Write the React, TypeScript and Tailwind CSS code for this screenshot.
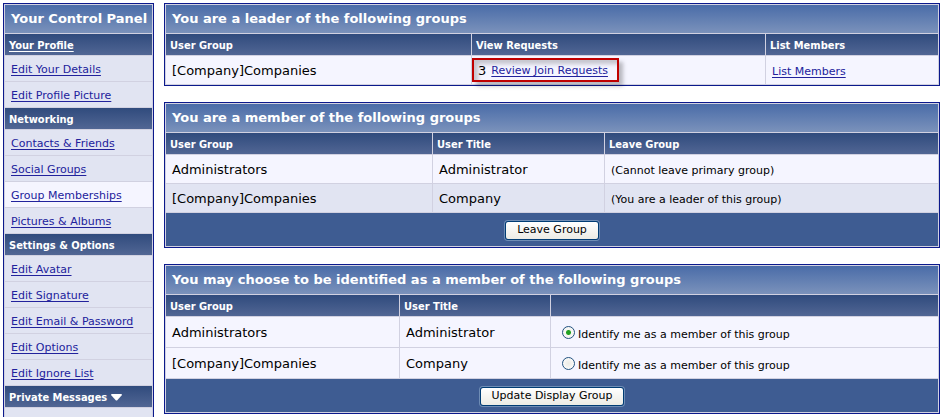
import type { ReactNode } from "react";

type NavGroup = { title: string; underlined?: boolean; arrow?: boolean; items: string[] };

const navGroups: NavGroup[] = [
  { title: "Your Profile", underlined: true, items: ["Edit Your Details", "Edit Profile Picture"] },
  {
    title: "Networking",
    items: ["Contacts & Friends", "Social Groups", "Group Memberships", "Pictures & Albums"],
  },
  {
    title: "Settings & Options",
    items: ["Edit Avatar", "Edit Signature", "Edit Email & Password", "Edit Options", "Edit Ignore List"],
  },
  { title: "Private Messages", arrow: true, items: ["List Messages"] },
];

const current = "Group Memberships";

const titleCell =
  "h-7 bg-linear-to-b from-[#4a6ca8] to-[#7b92bb] px-1.5 py-0 text-left text-[13px] leading-4 font-bold text-white";
const headCell =
  "h-[21px] bg-linear-to-b from-[#304b7d] to-[#516694] px-1 pt-0.5 pb-0 text-left font-['DejaVu_Sans_Condensed','DejaVu_Sans',sans-serif] text-[11px] leading-4 font-bold text-white";
const link = "text-[11px] text-[#22229c] underline underline-offset-2";

function Panel({ title, widths, heads, children }: {
  title: string;
  widths: string[];
  heads: string[];
  children: ReactNode;
}) {
  return (
    <table className="w-full table-fixed border-separate border-spacing-px border border-[#0b198c] bg-[#d1d1e1]">
      <colgroup>
        {widths.map((w, i) => (
          <col key={i} className={w} />
        ))}
      </colgroup>
      <thead>
        <tr>
          <th colSpan={3} className={titleCell}>{title}</th>
        </tr>
        <tr>
          {heads.map((h, i) => (
            <th key={i} scope="col" className={headCell}>{h}</th>
          ))}
        </tr>
      </thead>
      {children}
    </table>
  );
}

function Cell({ tall, alt, small, children }: {
  tall?: boolean;
  alt?: boolean;
  small?: boolean;
  children: ReactNode;
}) {
  return (
    <td
      className={`px-1.5 pb-0 leading-4 ${tall ? "h-[30px]" : "h-7"} ${alt ? "bg-[#e1e4f2]" : "bg-[#f5f5ff]"} ${
        small ? "pt-1 text-[11px]" : "pt-0.5 text-[13px]"
      }`}
    >
      {children}
    </td>
  );
}

function Footer({ label }: { label: string }) {
  return (
    <tfoot>
      <tr>
        <td colSpan={3} className="h-[33px] bg-[#3e5c92] p-0 text-center">
          <button
            type="submit"
            className="h-[19px] rounded-[3px] border border-[#003c74] bg-linear-to-b from-white to-[#ecebe5] px-[11px] align-middle text-[11px] leading-4 text-black shadow-[0_0_0_1px_#6f8db5]"
          >
            {label}
          </button>
        </td>
      </tr>
    </tfoot>
  );
}

function Identify({ id, checked }: { id: string; checked?: boolean }) {
  return (
    <div className="flex h-[30px] items-center gap-[3px] pl-[5px]">
      <input
        id={id}
        type="radio"
        name="displaygroup"
        defaultChecked={checked}
        className="size-[13px] shrink-0 appearance-none rounded-full border border-[#21517f] bg-[radial-gradient(circle,#ecebe5,#ffffff)] checked:bg-[radial-gradient(circle,#21a121_0,#21a121_2px,#f6f6f2_3px)]"
      />
      <label htmlFor={id} className="pt-1.5">Identify me as a member of this group</label>
    </div>
  );
}

export default function App() {
  return (
    <div className="flex items-start gap-2.5 bg-white pt-[3px] pr-0.5 pl-[3px] font-['DejaVu_Sans',sans-serif] text-black">
      <nav className="w-[151px] shrink-0 border border-[#0b198c] bg-[#d1d1e1] p-px">
        <ul className="flex flex-col gap-px">
          <li className={`${titleCell} flex items-center whitespace-nowrap`}>Your Control Panel</li>
          {navGroups.map((group) => (
            <li key={group.title}>
              <h2 className={`${headCell} flex items-center gap-1`}>
                {group.underlined ? (
                  <a href="#profile" className="underline underline-offset-2">{group.title}</a>
                ) : (
                  group.title
                )}
                {group.arrow && (
                  <svg width="11" height="7" viewBox="0 0 11 7" aria-hidden="true">
                    <path d="M0 1 Q0 0 1 0 H10 Q11 0 11 1 L6.5 6 Q5.5 7 4.5 6 Z" fill="#fff" />
                  </svg>
                )}
              </h2>
              <ul className="mt-px flex flex-col gap-px">
                {group.items.map((item) => (
                  <li
                    key={item}
                    className={`flex h-[25px] items-center px-1.5 pt-1 whitespace-nowrap ${
                      item === current ? "bg-[#f5f5ff]" : "bg-[#e1e4f2]"
                    }`}
                  >
                    <a href="#item" className={link}>{item}</a>
                  </li>
                ))}
              </ul>
            </li>
          ))}
        </ul>
      </nav>

      <main className="flex min-w-0 flex-1 flex-col gap-4">
        <Panel
          title="You are a leader of the following groups"
          widths={["w-[305px]", "w-[293px]", ""]}
          heads={["User Group", "View Requests", "List Members"]}
        >
          <tbody>
            <tr>
              <Cell>[Company]Companies</Cell>
              <td className="h-7 bg-[#f5f5ff] p-0 text-[13px] leading-4">
                <div className="flex h-6 w-[147px] items-center gap-[5px] border-2 border-[#c00000] pt-0.5 pl-1 whitespace-nowrap shadow-[4px_4px_4px_rgba(0,0,0,0.25),inset_4px_4px_4px_rgba(0,0,0,0.2)]">
                  <span>3</span>
                  <a href="#requests" className={link}>Review Join Requests</a>
                </div>
              </td>
              <Cell>
                <a href="#members" className={link}>List Members</a>
              </Cell>
            </tr>
          </tbody>
        </Panel>

        <Panel
          title="You are a member of the following groups"
          widths={["w-[266px]", "w-[171px]", ""]}
          heads={["User Group", "User Title", "Leave Group"]}
        >
          <tbody>
            <tr>
              <Cell>Administrators</Cell>
              <Cell>Administrator</Cell>
              <Cell small>(Cannot leave primary group)</Cell>
            </tr>
            <tr>
              <Cell alt>[Company]Companies</Cell>
              <Cell alt>Company</Cell>
              <Cell alt small>(You are a leader of this group)</Cell>
            </tr>
          </tbody>
          <Footer label="Leave Group" />
        </Panel>

        <Panel
          title="You may choose to be identified as a member of the following groups"
          widths={["w-[233px]", "w-[150px]", ""]}
          heads={["User Group", "User Title", ""]}
        >
          <tbody>
            <tr>
              <Cell tall>Administrators</Cell>
              <Cell tall>Administrator</Cell>
              <td className="h-[30px] bg-[#f5f5ff] px-1.5 py-0 text-[11px] leading-4">
                <Identify id="group-admin" checked />
              </td>
            </tr>
            <tr>
              <Cell tall>[Company]Companies</Cell>
              <Cell tall>Company</Cell>
              <td className="h-[30px] bg-[#f5f5ff] px-1.5 py-0 text-[11px] leading-4">
                <Identify id="group-company" />
              </td>
            </tr>
          </tbody>
          <Footer label="Update Display Group" />
        </Panel>
      </main>
    </div>
  );
}
